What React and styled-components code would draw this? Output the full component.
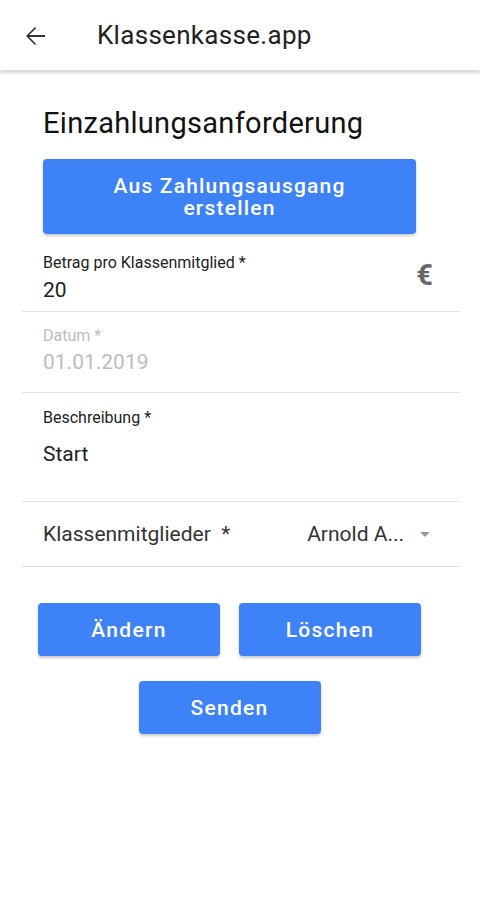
import React from "react";
import styled, { createGlobalStyle } from "styled-components";

const blue = "#3d83f7";

const GlobalStyle = createGlobalStyle`
  body {
    margin: 0;
    background: #ffffff;
    font-family: Roboto, "Liberation Sans", sans-serif;
  }
`;

export default function App() {
  return (
    <>
      <GlobalStyle />
      <Page>
        <AppBar>
          <BackButton aria-label="Zurück">
            <svg width="30" height="30" viewBox="0 0 24 24">
              <path
                d="M20 11.2H7.4l5.5-5.5L12 4.8 4.8 12l7.2 7.2.9-.9-5.5-5.5H20v-1.6z"
                fill="#333"
              />
            </svg>
          </BackButton>
          <AppTitle>Klassenkasse.app</AppTitle>
        </AppBar>

        <Content>
          <Heading>Einzahlungsanforderung</Heading>
          <WideButton>
            Aus Zahlungsausgang
            <br />
            erstellen
          </WideButton>

          <Field $height={78} $pad={19}>
            <FieldText>
              <Label>Betrag pro Klassenmitglied *</Label>
              <Value $top={6}>20</Value>
            </FieldText>
            <Euro>€</Euro>
          </Field>

          <Field $height={81} $pad={14} $disabled>
            <FieldText>
              <Label>Datum *</Label>
              <Value $top={5}>01.01.2019</Value>
            </FieldText>
          </Field>

          <Field $height={109} $pad={15}>
            <FieldText>
              <Label>Beschreibung *</Label>
              <Value $top={15}>Start</Value>
            </FieldText>
          </Field>

          <SelectRow>
            <span>Klassenmitglieder&nbsp; *</span>
            <SelectValue>
              Arnold A...
              <Caret />
            </SelectValue>
          </SelectRow>

          <ButtonGrid>
            <ActionButton>Ändern</ActionButton>
            <ActionButton>Löschen</ActionButton>
            <ActionButton $center>Senden</ActionButton>
          </ButtonGrid>
        </Content>
      </Page>
    </>
  );
}

const Page = styled.div`
  width: 480px;
  min-height: 900px;
  background: #fff;
`;

const AppBar = styled.header`
  height: 71px;
  display: flex;
  align-items: center;
  padding-left: 20px;
  box-shadow: 0 2px 3px rgba(0, 0, 0, 0.16);
  border-bottom: 1px solid #dcdcdc;
  box-sizing: border-box;
`;

const BackButton = styled.div`
  width: 30px;
  height: 30px;
  display: flex;
  margin-right: 47px;
  margin-top: 1px;
`;

const AppTitle = styled.h1`
  margin: 0;
  font-size: 26px;
  font-weight: 400;
  color: #222;
  letter-spacing: 0.3px;
`;

const Content = styled.main`
  padding: 35px 20px 0 22px;
`;

const Heading = styled.h2`
  margin: 0 0 19px 21px;
  font-size: 29px;
  font-weight: 400;
  color: #111;
  line-height: 34px;
  letter-spacing: 0.3px;
`;

const WideButton = styled.button`
  display: block;
  margin-left: 21px;
  width: 373px;
  height: 75px;
  border: none;
  border-radius: 4px;
  background: ${blue};
  color: #fff;
  font-family: inherit;
  font-size: 21px;
  font-weight: 500;
  letter-spacing: 1.2px;
  line-height: 22px;
  box-shadow: 0 2px 3px rgba(0, 0, 0, 0.2);
`;

const Field = styled.div`
  height: ${(p) => p.$height}px;
  box-sizing: border-box;
  padding: ${(p) => p.$pad}px 20px 0 21px;
  border-bottom: 1px solid #e2e2e2;
  display: flex;
  justify-content: space-between;
  color: ${(p) => (p.$disabled ? "#bdbdbd" : "#222")};
`;

const FieldText = styled.div`
  display: flex;
  flex-direction: column;
`;

const Label = styled.span`
  font-size: 16px;
  line-height: 19px;
`;

const Value = styled.span`
  margin-top: ${(p) => p.$top}px;
  font-size: 21px;
  line-height: 25px;
`;

const Euro = styled.span`
  font-size: 29px;
  line-height: 29px;
  font-weight: 700;
  color: #666;
  margin-top: 8px;
  margin-right: 7px;
`;

const SelectRow = styled.div`
  height: 65px;
  box-sizing: border-box;
  padding: 0 30px 0 21px;
  border-bottom: 1px solid #e2e2e2;
  display: flex;
  align-items: center;
  justify-content: space-between;
  font-size: 21px;
  color: #333;
`;

const SelectValue = styled.span`
  display: flex;
  align-items: center;
  gap: 16px;
  color: #333;
`;

const Caret = styled.span`
  width: 0;
  height: 0;
  border-left: 5px solid transparent;
  border-right: 5px solid transparent;
  border-top: 5px solid #999;
`;

const ButtonGrid = styled.div`
  margin-top: 36px;
  padding-left: 16px;
  display: grid;
  grid-template-columns: 182px 182px;
  column-gap: 19px;
  row-gap: 25px;
`;

const ActionButton = styled.button`
  height: 53px;
  border: none;
  border-radius: 4px;
  background: ${blue};
  color: #fff;
  font-family: inherit;
  font-size: 21px;
  font-weight: 500;
  letter-spacing: 1.3px;
  box-shadow: 0 2px 3px rgba(0, 0, 0, 0.22);
  ${(p) =>
    p.$center &&
    `
    grid-column: 1 / span 2;
    justify-self: center;
    width: 182px;
  `}
`;
